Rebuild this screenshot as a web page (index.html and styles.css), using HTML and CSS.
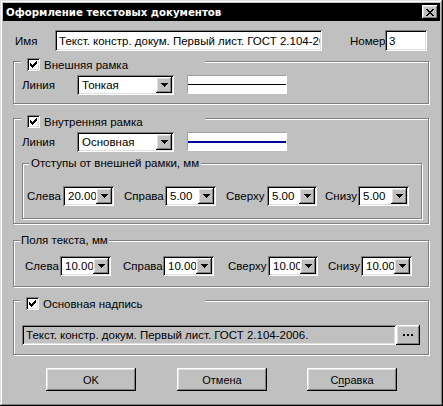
FILE: index.html
```html
<!DOCTYPE html>
<html lang="ru">
<head>
<meta charset="utf-8">
<title>Оформление текстовых документов</title>
<link rel="stylesheet" href="styles.css">
</head>
<body>
<div class="window">
  <div class="titlebar">
    <span class="title">Оформление текстовых документов</span>
    <span class="btn-close raised">
      <svg width="8" height="7" viewBox="0 0 8 7" shape-rendering="crispEdges"><path fill="#000" d="M0 0h2v1H0zM6 0h2v1H6zM1 1h2v1H1zM5 1h2v1H5zM2 2h4v1H2zM3 3h2v1H3zM2 4h4v1H2zM1 5h2v1H1zM5 5h2v1H5zM0 6h2v1H0zM6 6h2v1H6z"/></svg>
    </span>
  </div>

  <div class="content">
    <div class="name-row">
      <span class="lbl lbl-name">Имя</span>
      <div class="field sunken w-name"><span class="txt">Текст. констр. докум. Первый лист. ГОСТ 2.104-2006.</span></div>
      <span class="lbl lbl-num">Номер</span>
      <div class="field sunken w-num"><span class="txt">3</span></div>
    </div>

    <div class="group g1">
      <div class="legend legend-check">
        <span class="check sunken"><svg width="7" height="7" viewBox="0 0 7 7" shape-rendering="crispEdges"><path fill="#000" d="M6 0h1v1H6zM5 1h2v1H5zM0 2h1v1H0zM4 2h3v1H4zM0 3h2v1H0zM3 3h3v1H3zM0 4h5v1H0zM1 5h3v1H1zM2 6h1v1H2z"/></svg></span>
        <span class="legend-text">Внешняя рамка</span>
      </div>
      <div class="row">
        <span class="lbl lbl-line">Линия</span>
        <div class="combo sunken w-line">
          <span class="txt">Тонкая</span>
          <span class="drop raised"><svg width="7" height="4" viewBox="0 0 7 4" shape-rendering="crispEdges"><path fill="#000" d="M0 0h7v1H0zM1 1h5v1H1zM2 2h3v1H2zM3 3h1v1H3z"/></svg></span>
        </div>
        <div class="preview"><span class="stroke stroke-thin"></span></div>
      </div>
    </div>

    <div class="group g2">
      <div class="legend legend-check">
        <span class="check sunken"><svg width="7" height="7" viewBox="0 0 7 7" shape-rendering="crispEdges"><path fill="#000" d="M6 0h1v1H6zM5 1h2v1H5zM0 2h1v1H0zM4 2h3v1H4zM0 3h2v1H0zM3 3h3v1H3zM0 4h5v1H0zM1 5h3v1H1zM2 6h1v1H2z"/></svg></span>
        <span class="legend-text">Внутренняя рамка</span>
      </div>
      <div class="row">
        <span class="lbl lbl-line">Линия</span>
        <div class="combo sunken w-line">
          <span class="txt">Основная</span>
          <span class="drop raised"><svg width="7" height="4" viewBox="0 0 7 4" shape-rendering="crispEdges"><path fill="#000" d="M0 0h7v1H0zM1 1h5v1H1zM2 2h3v1H2zM3 3h1v1H3z"/></svg></span>
        </div>
        <div class="preview"><span class="stroke stroke-main"></span></div>
      </div>

      <div class="group g2i">
        <div class="legend legend-plain legend-inner">Отступы от внешней рамки, мм</div>
        <div class="row">
          <span class="lbl li1">Слева</span>
          <div class="combo sunken w51"><span class="txt">20.00</span><span class="drop raised"><svg width="7" height="4" viewBox="0 0 7 4" shape-rendering="crispEdges"><path fill="#000" d="M0 0h7v1H0zM1 1h5v1H1zM2 2h3v1H2zM3 3h1v1H3z"/></svg></span></div>
          <span class="lbl li2">Справа</span>
          <div class="combo sunken w51"><span class="txt">5.00</span><span class="drop raised"><svg width="7" height="4" viewBox="0 0 7 4" shape-rendering="crispEdges"><path fill="#000" d="M0 0h7v1H0zM1 1h5v1H1zM2 2h3v1H2zM3 3h1v1H3z"/></svg></span></div>
          <span class="lbl li3">Сверху</span>
          <div class="combo sunken w50"><span class="txt">5.00</span><span class="drop raised"><svg width="7" height="4" viewBox="0 0 7 4" shape-rendering="crispEdges"><path fill="#000" d="M0 0h7v1H0zM1 1h5v1H1zM2 2h3v1H2zM3 3h1v1H3z"/></svg></span></div>
          <span class="lbl li4">Снизу</span>
          <div class="combo sunken w51"><span class="txt">5.00</span><span class="drop raised"><svg width="7" height="4" viewBox="0 0 7 4" shape-rendering="crispEdges"><path fill="#000" d="M0 0h7v1H0zM1 1h5v1H1zM2 2h3v1H2zM3 3h1v1H3z"/></svg></span></div>
        </div>
      </div>
    </div>

    <div class="group g3">
      <div class="legend legend-plain legend-fields">Поля текста, мм</div>
      <div class="row">
        <span class="lbl lf1">Слева</span>
        <div class="combo sunken w51"><span class="txt">10.00</span><span class="drop raised"><svg width="7" height="4" viewBox="0 0 7 4" shape-rendering="crispEdges"><path fill="#000" d="M0 0h7v1H0zM1 1h5v1H1zM2 2h3v1H2zM3 3h1v1H3z"/></svg></span></div>
        <span class="lbl lf2">Справа</span>
        <div class="combo sunken w51"><span class="txt">10.00</span><span class="drop raised"><svg width="7" height="4" viewBox="0 0 7 4" shape-rendering="crispEdges"><path fill="#000" d="M0 0h7v1H0zM1 1h5v1H1zM2 2h3v1H2zM3 3h1v1H3z"/></svg></span></div>
        <span class="lbl lf3">Сверху</span>
        <div class="combo sunken w50"><span class="txt">10.00</span><span class="drop raised"><svg width="7" height="4" viewBox="0 0 7 4" shape-rendering="crispEdges"><path fill="#000" d="M0 0h7v1H0zM1 1h5v1H1zM2 2h3v1H2zM3 3h1v1H3z"/></svg></span></div>
        <span class="lbl lf4">Снизу</span>
        <div class="combo sunken w51"><span class="txt">10.00</span><span class="drop raised"><svg width="7" height="4" viewBox="0 0 7 4" shape-rendering="crispEdges"><path fill="#000" d="M0 0h7v1H0zM1 1h5v1H1zM2 2h3v1H2zM3 3h1v1H3z"/></svg></span></div>
      </div>
    </div>

    <div class="group g4">
      <div class="legend legend-check legend-stamp">
        <span class="check sunken"><svg width="7" height="7" viewBox="0 0 7 7" shape-rendering="crispEdges"><path fill="#000" d="M6 0h1v1H6zM5 1h2v1H5zM0 2h1v1H0zM4 2h3v1H4zM0 3h2v1H0zM3 3h3v1H3zM0 4h5v1H0zM1 5h3v1H1zM2 6h1v1H2z"/></svg></span>
        <span class="legend-text">Основная надпись</span>
      </div>
      <div class="row">
        <div class="field sunken readonly w-stamp"><span class="txt">Текст. констр. докум. Первый лист. ГОСТ 2.104-2006.</span></div>
        <span class="dots raised"><i></i><i></i><i></i></span>
      </div>
    </div>

    <div class="buttons">
      <span class="button raised">OK</span>
      <span class="button raised">Отмена</span>
      <span class="button raised">С<u>п</u>равка</span>
    </div>
  </div>
</div>
</body>
</html>
```

FILE: styles.css
```css
* { box-sizing: border-box; }

body {
  margin: 0;
  background: #c0c0c0;
  font-family: "Liberation Sans", Arial, sans-serif;
  font-size: 11.5px;
  color: #000;
}

.window {
  width: 443px;
  height: 406px;
  padding: 3px;
  background: #c0c0c0;
  box-shadow: inset -1px -1px #000, inset 1px 1px #dfdfdf, inset -2px -2px #808080, inset 2px 2px #fff;
}

.raised {
  background: #c0c0c0;
  box-shadow: inset -1px -1px #000, inset 1px 1px #fff, inset -2px -2px #808080, inset 2px 2px #dfdfdf;
}

.sunken {
  background: #fff;
  box-shadow: inset 1px 1px #808080, inset -1px -1px #fff, inset 2px 2px #000, inset -2px -2px #dfdfdf;
}

.titlebar {
  height: 18px;
  background: #000;
  display: flex;
  align-items: center;
  justify-content: space-between;
  padding: 0 2px 0 3px;
}

.title {
  color: #fff;
  font-family: "DejaVu Sans", Verdana, sans-serif;
  font-weight: bold;
  font-size: 10.2px;
  white-space: nowrap;
}

.btn-close {
  width: 16px;
  height: 14px;
  display: flex;
  align-items: center;
  justify-content: center;
}
.btn-close svg { display: block; margin-left: -1px; }

.content { padding-left: 10px; }

.lbl { white-space: nowrap; flex: none; }

.name-row {
  display: flex;
  align-items: center;
  margin-top: 9px;
  height: 21px;
}
.lbl-name { margin-left: 2px; width: 40px; }
.lbl-num { margin-left: 28px; width: 35px; }

.field {
  height: 21px;
  padding: 2px;
  display: flex;
  align-items: center;
  flex: none;
}
.field .txt, .combo .txt {
  flex: 1;
  overflow: hidden;
  white-space: nowrap;
  padding-left: 2px;
  min-width: 0;
}
.combo .txt { padding-left: 3px; }
.w-name { width: 267px; }
.w-num { width: 42px; }

.group {
  position: relative;
  width: 416px;
  border: 1px solid #808080;
  box-shadow: inset 1px 1px #fff, 1px 1px #fff;
}

.legend {
  position: absolute;
  background: #c0c0c0;
  display: flex;
  align-items: center;
  white-space: nowrap;
}
.legend-check {
  top: -4px;
  left: 7px;
  width: 184px;
  height: 13px;
  padding-left: 6px;
}
.legend-stamp { left: 6px; width: 185px; }
.legend-text { margin-left: 4px; }

.legend-plain {
  top: -8px;
  height: 14px;
  padding: 0 2px;
}
.legend-inner { left: 6px; }
.legend-fields { left: 6px; padding: 0 1px; }

.check {
  width: 13px;
  height: 13px;
  display: flex;
  align-items: center;
  justify-content: center;
  flex: none;
}
.check svg { display: block; }

.row {
  display: flex;
  align-items: center;
}

.combo {
  height: 20px;
  padding: 2px;
  display: flex;
  align-items: center;
  flex: none;
}
.drop {
  width: 16px;
  height: 16px;
  display: flex;
  align-items: center;
  justify-content: center;
  flex: none;
}
.drop svg { display: block; }

.g1 { margin-top: 10px; padding: 13px 0 8px 8px; }
.g2 { margin-top: 14px; padding: 13px 0 4px 8px; }
.g3 { margin-top: 16px; padding: 15px 0 10px 11px; }
.g4 { margin-top: 13px; padding: 24px 0 9px 8px; }

.lbl-line { width: 55px; }
.w-line { width: 97px; }

.preview {
  margin-left: 13px;
  width: 100px;
  height: 19px;
  background: #fff;
  border-top: 1px solid #a0a0a0;
  border-left: 1px solid #a0a0a0;
  border-bottom: 1px solid #fff;
  border-right: 1px solid #fff;
  display: flex;
  align-items: center;
  align-self: flex-start;
}
.stroke { display: block; width: 100%; }
.stroke-thin { height: 1px; background: #000; }
.stroke-main { height: 2px; background: #0000a0; }

.g2i {
  margin-top: 11px;
  width: 400px;
  padding: 22px 0 12px 4px;
}
.w51 { width: 51px; }
.w50 { width: 50px; }

.li1 { width: 36px; }
.li2 { width: 41px; margin-left: 10px; }
.li3 { width: 41px; margin-left: 10px; }
.li4 { width: 33px; margin-left: 8px; }

.lf1 { width: 35px; }
.lf2 { width: 40px; margin-left: 12px; }
.lf3 { width: 40px; margin-left: 14px; }
.lf4 { width: 33px; margin-left: 10px; }

.readonly { background: #c0c0c0; height: 20px; }
.w-stamp { width: 374px; }

.dots {
  width: 24px;
  height: 20px;
  display: flex;
  align-items: center;
  justify-content: center;
  gap: 2px;
  flex: none;
}
.dots i {
  display: block;
  width: 2px;
  height: 2px;
  background: #000;
}

.buttons {
  margin-top: 13px;
  padding-left: 33px;
  display: flex;
}
.button {
  width: 90px;
  height: 23px;
  display: flex;
  align-items: center;
  justify-content: center;
  font-size: 11px;
}
.button + .button { margin-left: 41px; }
.button:last-child { margin-left: 40px; }
.button u { text-decoration: underline; text-underline-offset: 2px; }
```
